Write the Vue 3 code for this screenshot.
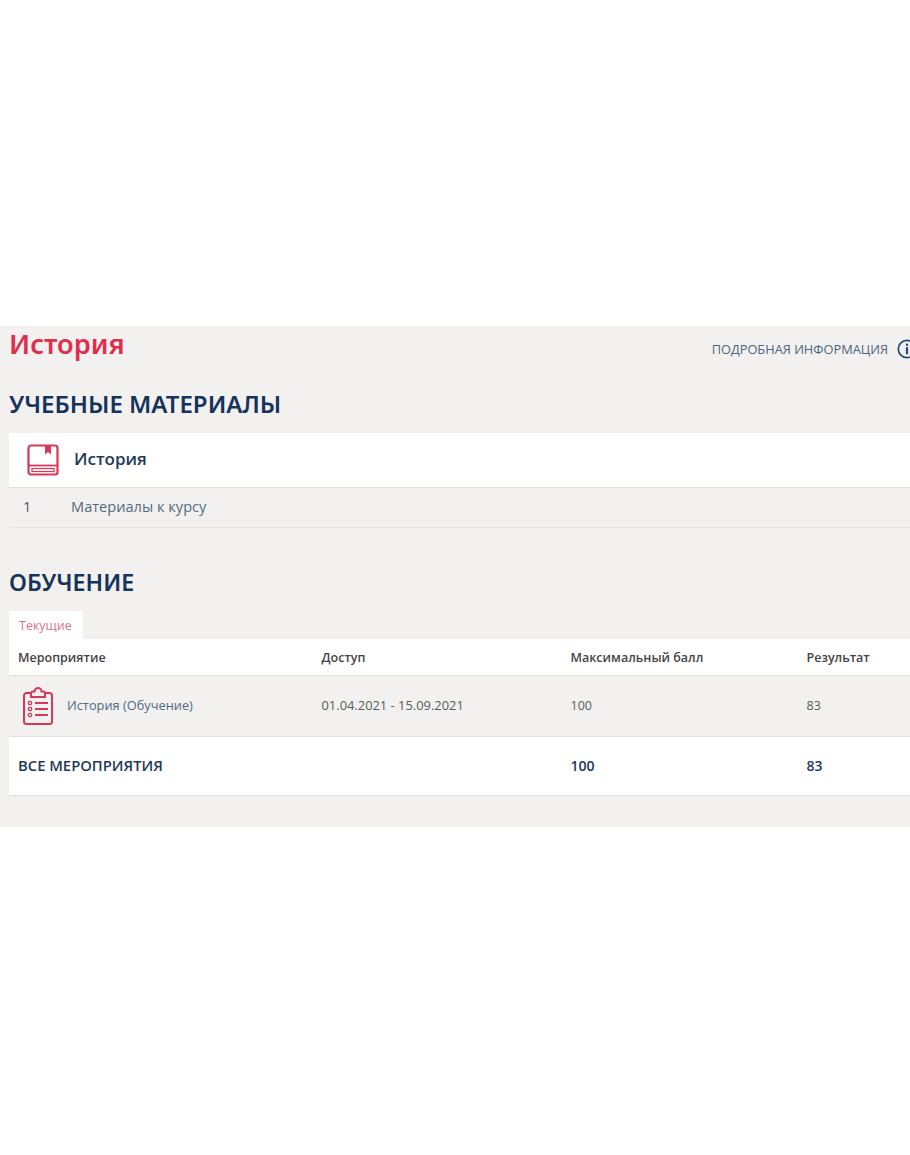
<script setup>
const materials = [{ num: 1, name: "Материалы к курсу" }];
const columns = ["Мероприятие", "Доступ", "Максимальный балл", "Результат"];
</script>

<template>
  <div class="page">
    <div class="content">
      <div class="top">
        <h1>История</h1>
        <a class="info">
          ПОДРОБНАЯ ИНФОРМАЦИЯ
          <svg class="info-icon" width="20" height="20" viewBox="0 0 20 20">
            <circle cx="10" cy="10" r="8.7" fill="none" stroke="#1f4a7d" stroke-width="1.7" />
            <circle cx="10" cy="5.8" r="1.2" fill="#1f4a7d" />
            <rect x="8.9" y="8.2" width="2.2" height="7" fill="#1f4a7d" />
          </svg>
        </a>
      </div>

      <h2 class="first">УЧЕБНЫЕ МАТЕРИАЛЫ</h2>
      <div class="course">
        <svg width="32" height="32" viewBox="0 0 32 32" fill="none" stroke="#d6385a" stroke-width="2.200">
          <rect x="1.500" y="1.500" width="29" height="29" rx="2.500" />
          <path d="M1.500 21.500h29" stroke-width="1.800" />
          <rect x="5" y="24.500" width="22" height="3" stroke-width="1.200" />
          <path d="M18 1.500h6v9l-3-2.500-3 2.500z" fill="#d6385a" stroke="none" />
        </svg>
        <span>История</span>
      </div>
      <div v-for="m in materials" :key="m.num" class="material">
        <span class="num">{{ m.num }}</span>
        <a>{{ m.name }}</a>
      </div>

      <h2 class="second">ОБУЧЕНИЕ</h2>
      <div class="tab">Текущие</div>
      <div class="row head">
        <div v-for="c in columns" :key="c">{{ c }}</div>
      </div>
      <div class="row item">
        <div class="event">
          <svg width="32" height="40" viewBox="0 0 32 40" fill="none" stroke="#d6385a" stroke-width="2">
            <path d="M9 7H4.500a2.500 2.500 0 0 0-2.500 2.500v26A2.500 2.500 0 0 0 4.500 38h23a2.500 2.500 0 0 0 2.500-2.500v-26A2.500 2.500 0 0 0 27.500 7H23" />
            <path d="M9 11V7.500a2 2 0 0 1 2-2h1.500a3.500 3.500 0 0 1 7 0H21a2 2 0 0 1 2 2V11z" />
            <circle cx="8" cy="17" r="1.700" stroke-width="1.300" />
            <circle cx="8" cy="23" r="1.700" stroke-width="1.300" />
            <circle cx="8" cy="29" r="1.700" stroke-width="1.300" />
            <path d="M13 17h13M13 23h13M13 29h13" />
          </svg>
          <a>История (Обучение)</a>
        </div>
        <div class="date">01.04.2021 - 15.09.2021</div>
        <div>100</div>
        <div>83</div>
      </div>
      <div class="row total">
        <div class="total-label">ВСЕ МЕРОПРИЯТИЯ</div>
        <div></div>
        <div>100</div>
        <div>83</div>
      </div>
    </div>
  </div>
</template>

<style>
body {
  background: #fff;
}
</style>

<style scoped>
.page {
  height: 1155px;
  padding-top: 326px;
  box-sizing: border-box;
  overflow: hidden;
  font-family: "Open Sans", "Noto Sans", sans-serif;
}
.content {
  height: 501px;
  background: #f2f1ef;
  padding-left: 9px;
  box-sizing: border-box;
}
.top {
  display: flex;
  justify-content: space-between;
  height: 46px;
}
h1 {
  margin: 0;
  font-family: "Noto Sans", sans-serif;
  font-size: 27.200px;
  line-height: 36px;
  font-weight: 600;
  color: #df2f4c;
}
.info {
  display: flex;
  align-items: center;
  gap: 9px;
  height: 20px;
  margin: 13px -7px 0 0;
  font-size: 12.800px;
  color: #4d6580;
  white-space: nowrap;
}
.info-icon {
  flex: none;
}
h2 {
  margin: 0;
  font-family: "Noto Sans", sans-serif;
  font-size: 24px;
  line-height: 32px;
  font-weight: 600;
  color: #16335c;
}
.first {
  margin-top: 16px;
}
.course {
  display: flex;
  align-items: center;
  gap: 15px;
  height: 54px;
  margin-top: 13px;
  padding-left: 18px;
  background: #fff;
  border-bottom: 1px solid #e0dfdc;
  font-size: 17px;
  font-weight: 600;
  color: #1e3858;
}
.course svg {
  flex: none;
}
.course span {
  margin-bottom: 3px;
}
.material {
  display: flex;
  align-items: center;
  height: 36px;
  padding-bottom: 3px;
  border-bottom: 1px solid #e6e5e2;
  font-size: 14.600px;
  color: #546a80;
}
.num {
  width: 62px;
  padding-left: 14px;
  box-sizing: border-box;
  color: #555;
}
.second {
  margin-top: 38px;
  font-size: 23.200px;
}
.tab {
  width: 74px;
  height: 28px;
  margin-top: 13px;
  padding-left: 10px;
  box-sizing: border-box;
  background: #fff;
  font-size: 12.500px;
  line-height: 29px;
  color: #d8748a;
}
.row {
  display: grid;
  grid-template-columns: 303.500px 249px 236px 1fr;
  align-items: center;
  padding-left: 9px;
  font-size: 12.500px;
  color: #5a5a5a;
}
.head {
  height: 36px;
  background: #fff;
  border-bottom: 1px solid #e0dfdc;
  font-weight: 600;
  color: #444;
}
.item {
  height: 58px;
  padding-bottom: 2px;
  border-bottom: 1px solid #e3e2df;
}
.date {
  font-size: 12.900px;
}
.event {
  display: flex;
  align-items: center;
  gap: 13px;
  margin-left: 4px;
  margin-top: 2px;
  font-size: 12.800px;
  color: #4f6a85;
}
.event svg {
  flex: none;
}
.event a {
  margin-top: -2px;
}
.total {
  height: 56px;
  padding-bottom: 2px;
  background: #fff;
  border-bottom: 1px solid #e0dfdc;
  font-size: 14px;
  font-weight: 600;
  color: #1e3858;
}
.total-label {
  font-size: 14.800px;
}
</style>
